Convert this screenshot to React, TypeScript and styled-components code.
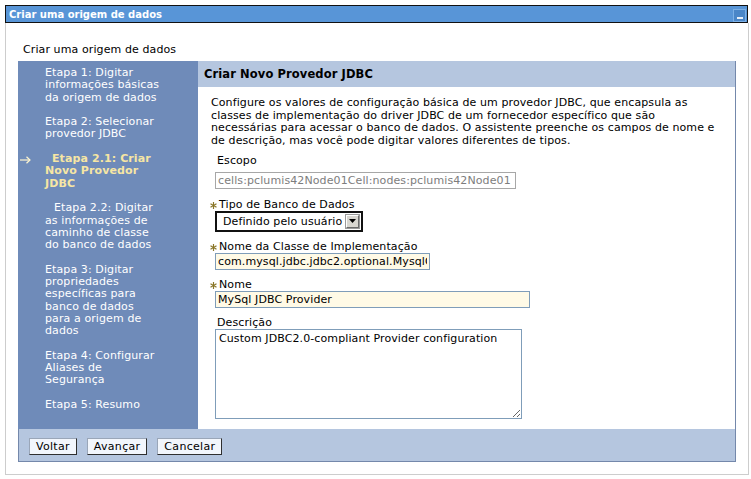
import React from "react";
import styled, { createGlobalStyle } from "styled-components";

const GlobalStyle = createGlobalStyle`
  html, body { margin: 0; padding: 0; background: #ffffff; }
  body {
    font-family: "DejaVu Sans", Verdana, sans-serif;
    font-size: 11px;
    letter-spacing: 0.1px;
    color: #000;
  }
`;

const Window = styled.div`
  margin: 5px 0 0 5px;
  width: 744px;
`;

const TitleBar = styled.div`
  height: 16px;
  margin-right: 1px;
  border: 1px solid #111;
  background: #5895d7;
  display: flex;
  align-items: center;
  justify-content: space-between;
  padding: 0 1px 0 3px;
  color: #fff;
  font-weight: bold;
  font-size: 10px;
  letter-spacing: 0;
`;

const MinButton = styled.div`
  width: 11px;
  height: 11px;
  margin-top: 2px;
  background: #4a86c8;
  border: 1px solid #7cb0e6;
  display: flex;
  align-items: flex-end;
  justify-content: center;
  &::after {
    content: "";
    width: 6px;
    height: 2px;
    margin-bottom: 2px;
    background: #e8f0fa;
  }
`;

const Panel = styled.div`
  border: 1px solid #cdcdcd;
  border-top: none;
  padding: 20px 12px 12px 12px;
`;

const SubHeading = styled.div`
  margin-left: 5px;
  line-height: 13px;
  font-size: 11px;
`;

const Wizard = styled.div`
  margin-top: 5px;
  display: grid;
  grid-template-columns: 180px 1fr;
  border-right: 1px solid #7488ab;
  border-bottom: 1px solid #7488ab;
`;

const Nav = styled.div`
  background: #6f8bb9;
  padding: 6px 6px 0 27px;
  color: #ffffff;
  line-height: 12.3px;
`;

const NavItem = styled.div<{ $current?: boolean; $indent?: number }>`
  position: relative;
  margin-bottom: 12.3px;
  text-indent: ${(p) => p.$indent ?? 0}px;
  font-weight: ${(p) => (p.$current ? "bold" : "normal")};
  color: ${(p) => (p.$current ? "#f6e6a4" : "#ffffff")};
`;

const NavArrow = styled.svg`
  position: absolute;
  left: -25px;
  top: 3px;
`;

const Content = styled.div`
  background: #fff;
  display: flex;
  flex-direction: column;
`;

const Header = styled.div`
  height: 26px;
  background: #b5c6df;
  display: flex;
  align-items: center;
  padding-left: 6px;
  font-weight: bold;
  font-size: 11.5px;
`;

const Body = styled.div`
  padding: 10px 12px 10px 13px;
`;

const Intro = styled.p`
  margin: 0;
  line-height: 12.7px;
  white-space: nowrap;
`;

const Fields = styled.div`
  margin-top: 7px;
  margin-left: 4px;
  display: flex;
  flex-direction: column;
`;

const Field = styled.div<{ $gap?: number }>`
  display: flex;
  flex-direction: column;
  align-items: flex-start;
  margin-top: ${(p) => p.$gap ?? 9}px;
`;

const Label = styled.div<{ $required?: boolean }>`
  display: flex;
  align-items: center;
  height: 12px;
  line-height: 12px;
  margin-left: ${(p) => (p.$required ? "-5px" : "2px")};
  gap: 2px;
`;

const Star = styled.svg`
  flex: none;
  margin-top: 1px;
`;

const TextInput = styled.input<{ $w: number; $muted?: boolean; $cream?: boolean; $mt?: number }>`
  box-sizing: border-box;
  width: ${(p) => p.$w}px;
  height: 17px;
  margin: ${(p) => p.$mt ?? 0}px 0 0 0;
  padding: 0 2px;
  font-family: "DejaVu Sans", Verdana, sans-serif;
  font-size: 11px;
  letter-spacing: 0.1px;
  color: ${(p) => (p.$muted ? "#7d7d7d" : "#000")};
  background: ${(p) => (p.$cream ? "#fffae6" : "#fff")};
  border: 1px solid ${(p) => (p.$muted ? "#a7a7a7" : "#7f9db9")};
  outline: none;
`;

const SelectBox = styled.div`
  box-sizing: border-box;
  width: 148px;
  height: 21px;
  border: 2px solid #111;
  background: #fff;
  display: flex;
  align-items: center;
  justify-content: space-between;
  padding: 0 2px 0 6px;
  font-size: 11px;
`;

const DropButton = styled.div`
  box-sizing: border-box;
  width: 13px;
  height: 13px;
  background: #d8d6d0;
  border: 1px solid;
  border-color: #ffffff #6b6b6b #6b6b6b #ffffff;
  box-shadow: 0 0 0 1px #9a9a9a;
  display: flex;
  align-items: center;
  justify-content: center;
`;

const TextArea = styled.textarea`
  box-sizing: border-box;
  width: 307px;
  height: 90px;
  margin: 0;
  padding: 2px 3px;
  font-family: "DejaVu Sans", Verdana, sans-serif;
  font-size: 11px;
  letter-spacing: 0.1px;
  line-height: 13px;
  border: 1px solid #7f9db9;
  outline: none;
  resize: both;
`;

const ButtonBar = styled.div`
  grid-column: 1 / -1;
  height: 32px;
  background: #b5c6df;
  border-left: 1px solid #7488ab;
  display: flex;
  align-items: flex-start;
  gap: 10px;
  padding: 9px 10px 0 10px;
  box-sizing: border-box;
`;

const Button = styled.button`
  height: 17px;
  padding: 0 6px;
  font-family: "DejaVu Sans", Verdana, sans-serif;
  font-size: 11px;
  letter-spacing: 0.3px;
  line-height: 13px;
  color: #000;
  background: #f2f6fc;
  border: 1px solid;
  border-color: #9aa6b8 #2f2f2f #2f2f2f #9aa6b8;
  border-radius: 0;
`;

const RequiredStar = () => (
  <Star width="7" height="7" viewBox="0 0 7 7">
    <g stroke="#8a7628" strokeWidth="1.2">
      <line x1="3.5" y1="0" x2="3.5" y2="7" />
      <line x1="0.5" y1="1.8" x2="6.5" y2="5.2" />
      <line x1="0.5" y1="5.2" x2="6.5" y2="1.8" />
    </g>
  </Star>
);

const navSteps: { lines: string[]; current?: boolean; indent?: number }[] = [
  { lines: ["Etapa 1: Digitar", "informações básicas", "da origem de dados"] },
  { lines: ["Etapa 2: Selecionar", "provedor JDBC"] },
  { lines: ["Etapa 2.1: Criar", "Novo Provedor", "JDBC"], current: true, indent: 7 },
  { lines: ["Etapa 2.2: Digitar", "as informações de", "caminho de classe", "do banco de dados"], indent: 9 },
  {
    lines: [
      "Etapa 3: Digitar",
      "propriedades",
      "específicas para",
      "banco de dados",
      "para a origem de",
      "dados",
    ],
  },
  { lines: ["Etapa 4: Configurar", "Aliases de", "Segurança"] },
  { lines: ["Etapa 5: Resumo"] },
];

const introLines = [
  "Configure os valores de configuração básica de um provedor JDBC, que encapsula as",
  "classes de implementação do driver JDBC de um fornecedor específico que são",
  "necessárias para acessar o banco de dados. O assistente preenche os campos de nome e",
  "de descrição, mas você pode digitar valores diferentes de tipos.",
];

export default function App() {
  return (
    <>
      <GlobalStyle />
      <Window>
        <TitleBar>
          <span>Criar uma origem de dados</span>
          <MinButton />
        </TitleBar>
        <Panel>
          <SubHeading>Criar uma origem de dados</SubHeading>
          <Wizard>
            <Nav>
              {navSteps.map((s, i) => (
                <NavItem key={i} $current={s.current} $indent={s.indent}>
                  {s.current && (
                    <NavArrow width="11" height="8" viewBox="0 0 11 8">
                      <g stroke="#fff6d0" strokeWidth="1.2" fill="none">
                        <line x1="0" y1="4" x2="10" y2="4" />
                        <polyline points="6.5,0.7 10,4 6.5,7.3" />
                      </g>
                    </NavArrow>
                  )}
                  {s.lines.map((l, j) => (
                    <React.Fragment key={j}>
                      {j > 0 && <br />}
                      {l}
                    </React.Fragment>
                  ))}
                </NavItem>
              ))}
            </Nav>
            <Content>
              <Header>Criar Novo Provedor JDBC</Header>
              <Body>
                <Intro>
                  {introLines.map((l, i) => (
                    <React.Fragment key={i}>
                      {i > 0 && <br />}
                      {l}
                    </React.Fragment>
                  ))}
                </Intro>
                <Fields>
                  <Field $gap={0}>
                    <Label>Escopo</Label>
                    <TextInput
                      $w={301}
                      $mt={5}
                      $muted
                      readOnly
                      defaultValue="cells:pclumis42Node01Cell:nodes:pclumis42Node01"
                    />
                  </Field>
                  <Field $gap={10}>
                    <Label $required>
                      <RequiredStar />
                      Tipo de Banco de Dados
                    </Label>
                    <SelectBox>
                      <span>Definido pelo usuário</span>
                      <DropButton>
                        <svg width="7" height="4" viewBox="0 0 7 4">
                          <polygon points="0,0 7,0 3.5,4" fill="#000" />
                        </svg>
                      </DropButton>
                    </SelectBox>
                  </Field>
                  <Field>
                    <Label $required>
                      <RequiredStar />
                      Nome da Classe de Implementação
                    </Label>
                    <TextInput
                      $w={215}
                      $cream
                      readOnly
                      defaultValue="com.mysql.jdbc.jdbc2.optional.MysqlConnectionPoolDataSource"
                    />
                  </Field>
                  <Field>
                    <Label $required>
                      <RequiredStar />
                      Nome
                    </Label>
                    <TextInput $w={315} $cream readOnly defaultValue="MySql JDBC Provider" />
                  </Field>
                  <Field>
                    <Label>Descrição</Label>
                    <TextArea readOnly defaultValue="Custom JDBC2.0-compliant Provider configuration" />
                  </Field>
                </Fields>
              </Body>
            </Content>
            <ButtonBar>
              <Button>Voltar</Button>
              <Button>Avançar</Button>
              <Button>Cancelar</Button>
            </ButtonBar>
          </Wizard>
        </Panel>
      </Window>
    </>
  );
}
